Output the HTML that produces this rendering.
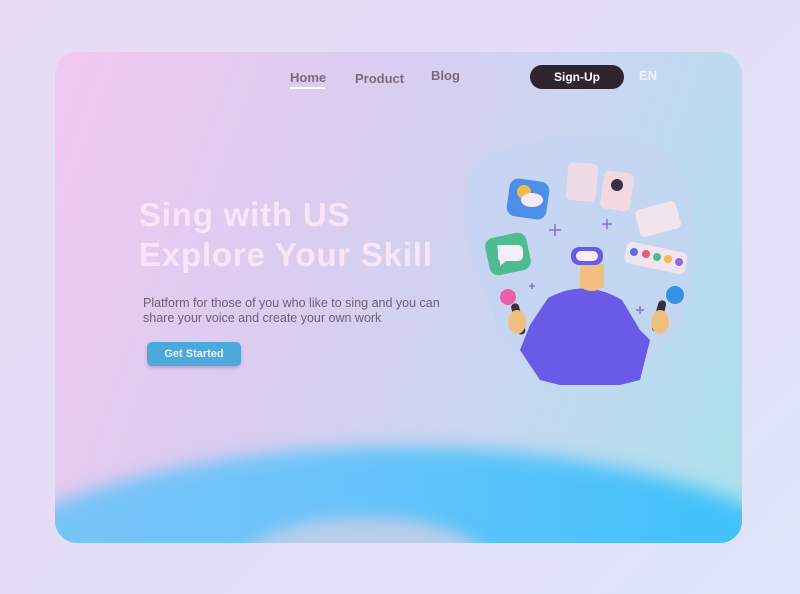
<!DOCTYPE html>
<html><head><style>
html,body{margin:0;padding:0;width:800px;height:594px;overflow:hidden;font-family:"Liberation Sans",sans-serif}
body{background:linear-gradient(135deg,#e8dcf5 0%,#e2ddf8 50%,#e0e6fb 100%);position:relative}
.card{position:absolute;left:55px;top:52px;width:687px;height:491px;border-radius:22px;overflow:hidden;
background:linear-gradient(110deg,#f2c8f0 0%,#dcccf0 35%,#cdd5f0 60%,#a9e2ec 100%)}
.blue{position:absolute;left:-160px;top:395px;width:1007px;height:420px;border-radius:50%;
background:linear-gradient(90deg,#7ec3f4,#6cc4fa 40%,#44c2fb 80%);filter:blur(9px)}
.pale{position:absolute;left:190px;top:465px;width:240px;height:90px;border-radius:50%;background:#b9cdea;filter:blur(8px)}
.nav{position:absolute;font-size:13px;font-weight:bold;color:#7e6a80}
.btn{position:absolute;left:475px;top:13px;width:94px;height:24px;border-radius:12px;background:#2f2530;color:#fff;font-size:12px;font-weight:bold;text-align:center;line-height:24px}
h1{position:absolute;left:84px;top:143px;margin:0;font-size:33px;line-height:40px;color:#fbe4f8;font-weight:bold;letter-spacing:0.8px}
p{position:absolute;left:88px;top:244px;margin:0;font-size:12.5px;line-height:15px;color:#6e6078}
.gs{position:absolute;left:92px;top:290px;width:94px;height:24px;border-radius:5px;background:#4da8dc;color:#e8f4ff;font-size:11px;font-weight:bold;text-align:center;line-height:24px;box-shadow:0 2px 3px rgba(80,80,140,.3)}
</style></head><body>
<div class="card">
<div class="blue"></div><div class="pale"></div>
<div class="nav" style="left:235px;top:18px">Home</div>
<div style="position:absolute;left:235px;top:35px;width:35px;height:2px;background:#fff"></div>
<div class="nav" style="left:300px;top:19px">Product</div>
<div class="nav" style="left:376px;top:16px">Blog</div>
<div class="btn">Sign-Up</div>
<div class="nav" style="left:584px;top:16px;color:#eef4ff">EN</div>
<h1>Sing with US<br>Explore Your Skill</h1>
<p>Platform for those of you who like to sing and you can<br>share your voice and create your own work</p>
<div class="gs">Get Started</div>
<svg style="position:absolute;left:395px;top:78px" width="260" height="270" viewBox="450 130 260 270">
<path d="M470 170 Q520 130 600 140 Q660 130 685 180 Q700 230 690 290 Q680 350 640 360 L560 380 Q500 360 490 300 Q455 240 470 170Z" fill="#c4d4f4" opacity=".7"/>
<rect x="508" y="180" width="40" height="38" rx="9" fill="#4d8fe8" transform="rotate(8 528 199)"/>
<circle cx="524" cy="192" r="7" fill="#f5b84a"/><ellipse cx="532" cy="200" rx="11" ry="7" fill="#f4eaf8"/>
<rect x="487" y="235" width="42" height="38" rx="9" fill="#4dbc90" transform="rotate(-12 508 254)"/>
<path d="M498 245 h20 a5 5 0 0 1 5 5 v6 a5 5 0 0 1 -5 5 h-12 l-6 5 v-5 a5 5 0 0 1 -2 -5 v-6 a5 5 0 0 1 0 -5z" fill="#f4eef8"/>
<rect x="567" y="163" width="30" height="38" rx="5" fill="#efdbe8" transform="rotate(5 582 182)"/>
<rect x="602" y="172" width="30" height="38" rx="5" fill="#f3d8e2" transform="rotate(8 617 191)"/>
<circle cx="617" cy="185" r="6" fill="#3a3040"/>
<rect x="637" y="205" width="42" height="28" rx="5" fill="#f2e4ee" transform="rotate(-15 658 219)"/>
<rect x="625" y="247" width="62" height="22" rx="6" fill="#efe4f0" transform="rotate(12 656 258)"/>
<circle cx="634" cy="252" r="4" fill="#5a6ee8"/><circle cx="646" cy="254" r="4" fill="#e85a7a"/><circle cx="657" cy="257" r="4" fill="#4dbc90"/><circle cx="668" cy="259" r="4" fill="#f5b84a"/><circle cx="679" cy="262" r="4" fill="#8a6ae8"/>
<path d="M549 230 h12 M555 224 v12 M602 224 h10 M607 219 v10 M636 310 h8 M640 306 v8 M529 286 h6 M532 283 v6" stroke="#8a6ae8" stroke-width="1.5"/>
<path d="M548 298 Q585 278 622 300 L640 330 L650 340 L640 380 L620 385 L560 385 L540 380 L520 350 L530 325Z" fill="#6a5ae8"/>
<path d="M580 265 q12 -8 24 0 v22 q-12 8 -24 0z" fill="#f0c080"/>
<rect x="571" y="247" width="32" height="18" rx="8" fill="#6a5ae8"/><rect x="576" y="251" width="22" height="10" rx="5" fill="#fbeefb"/>
<circle cx="508" cy="297" r="8" fill="#e860a8"/><rect x="514" y="303" width="8" height="32" rx="4" fill="#3a3040" transform="rotate(-15 518 318)"/>
<circle cx="675" cy="295" r="9" fill="#3a90e8"/><rect x="655" y="300" width="8" height="32" rx="4" fill="#3a3040" transform="rotate(15 659 316)"/>
<ellipse cx="517" cy="322" rx="9" ry="12" fill="#f0c080"/><ellipse cx="660" cy="322" rx="9" ry="12" fill="#f0c080"/>
</svg>
</div>
</body></html>
